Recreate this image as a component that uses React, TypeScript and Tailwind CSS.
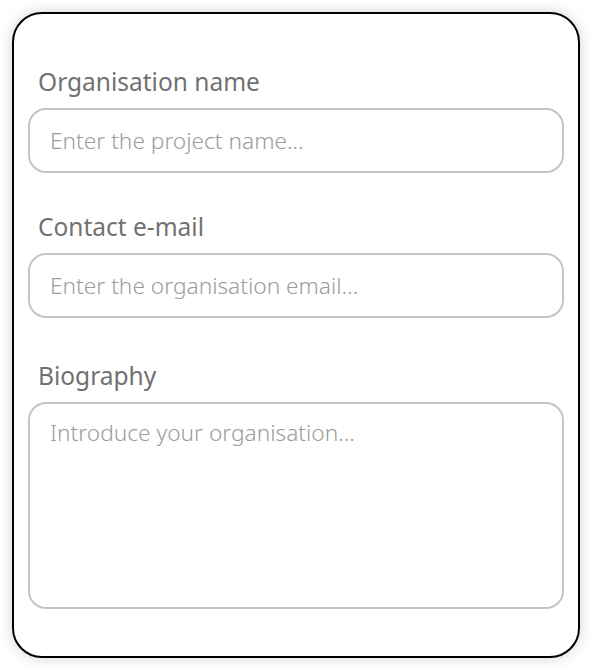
import React from "react";

export default function App() {
  return (
    <div className="w-[592px] h-[670px] bg-white p-[12px]" style={{ fontFamily: '"Noto Sans", sans-serif' }}>
      <div className="w-[568px] h-[646px] rounded-[30px] border-2 border-black bg-white shadow-[0_0_14px_rgba(0,0,0,0.18)] px-[14px] pt-[52px] pb-[47px] flex flex-col">
        <label className="block pl-[10px] text-[24.5px] leading-[32px] text-[#717171]">Organisation name</label>
        <input
          className="mt-[10px] h-[65px] w-full rounded-[18px] border-2 border-[#c4c4c4] px-[20px] text-[22.7px] font-light text-[#555] outline-none placeholder:text-[#9c9c9c]"
          placeholder="Enter the project name..."
        />
        <label className="mt-[38px] block pl-[10px] text-[24.5px] leading-[32px] text-[#717171]">Contact e-mail</label>
        <input
          className="mt-[10px] h-[65px] w-full rounded-[18px] border-2 border-[#c4c4c4] px-[20px] text-[22.7px] font-light text-[#555] outline-none placeholder:text-[#9c9c9c]"
          placeholder="Enter the organisation email..."
        />
        <label className="mt-[42px] block pl-[10px] text-[24.5px] leading-[32px] text-[#717171]">Biography</label>
        <textarea
          className="mt-[10px] flex-1 w-full resize-none rounded-[18px] border-2 border-[#c4c4c4] px-[20px] pt-[14px] text-[22.7px] leading-[30px] font-light text-[#555] outline-none placeholder:text-[#9c9c9c]"
          placeholder="Introduce your organisation..."
        />
      </div>
    </div>
  );
}
